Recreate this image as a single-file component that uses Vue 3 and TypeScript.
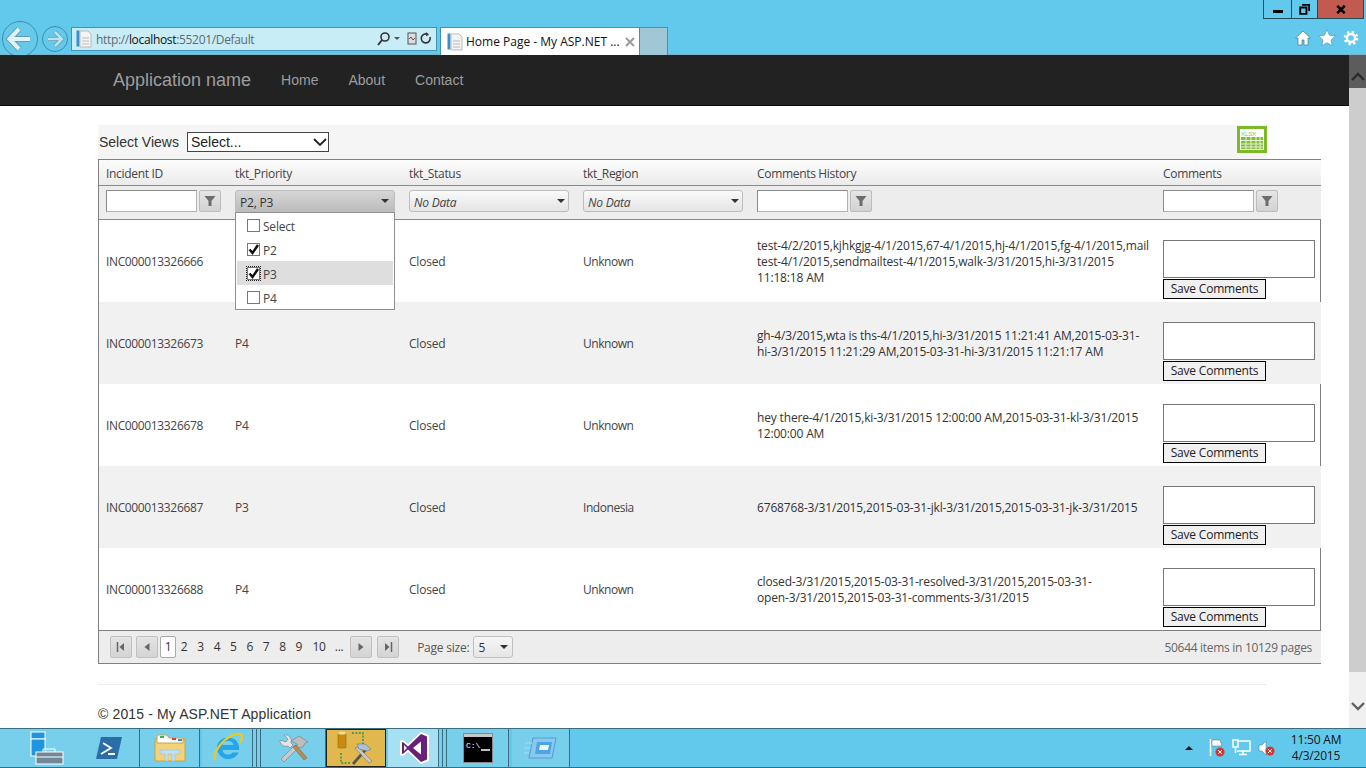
<template>
  <div class="screen">
    <header class="browser">
      <div class="win-row">
        <div class="win-btns">
          <button class="wb wb-min"><span class="min-bar"></span></button>
          <button class="wb wb-max">
            <svg width="11" height="11" viewBox="0 0 14 14"><path d="M4 1h9v8M1.500 4.500h8v8h-8z" fill="none" stroke="#000" stroke-width="2.400"/></svg>
          </button>
          <button class="wb wb-close">
            <svg width="10" height="9" viewBox="0 0 12 10"><path d="M1.500 0.500l9 9M10.500 0.500l-9 9" stroke="#000" stroke-width="3"/></svg>
          </button>
        </div>
      </div>
      <div class="nav-row">
        <svg class="back" width="38" height="38" viewBox="0 0 38 38">
          <circle cx="19" cy="19" r="17.500" fill="#66c9ea" stroke="#3a8fad"/>
          <path d="M18 9l-9.500 10 9.500 10M9 19h20" fill="none" stroke="#5f9db3" stroke-width="6"/>
          <path d="M18 9l-9.500 10 9.500 10M9 19h20" fill="none" stroke="#dff2f9" stroke-width="4"/>
        </svg>
        <svg class="fwd" width="28" height="28" viewBox="0 0 28 28">
          <circle cx="14" cy="14" r="12.500" fill="#66c9ea" stroke="#3a8fad"/>
          <path d="M14 7l7 7-7 7M21 14H7" fill="none" stroke="#5f9db3" stroke-width="4"/>
          <path d="M14 7l7 7-7 7M21 14H7" fill="none" stroke="#b9e4f2" stroke-width="2.500"/>
        </svg>
        <div class="addr">
          <svg class="doc" width="16" height="18" viewBox="0 0 16 18"><rect x="0.500" y="0.500" width="3" height="16" fill="#3a8fd0"/><path d="M4 1h8l3 3v13H4z" fill="#f4f4f4" stroke="#bbb"/><path d="M6 8h7M6 11h7M6 14h7" stroke="#bbb"/></svg>
          <span class="url">http://<b>localhost</b>:55201/Default</span>
          <svg class="addr-ico" width="58" height="16" viewBox="0 0 58 16">
            <circle cx="10" cy="6" r="4" fill="none" stroke="#333" stroke-width="1.600"/>
            <path d="M7 9l-4 5" stroke="#333" stroke-width="2"/>
            <path d="M19 6h6l-3 3z" fill="#555"/>
            <rect x="33" y="2" width="8" height="11" fill="#ddd" stroke="#555"/>
            <path d="M34 8l2-2 2 3 2-2" fill="none" stroke="#555"/>
            <path d="M55 6a4.500 4.500 0 1 1-2-2.500" fill="none" stroke="#333" stroke-width="1.600"/>
            <path d="M51 1l3 3-3 1z" fill="#333"/>
          </svg>
        </div>
        <div class="tab">
          <svg width="16" height="18" viewBox="0 0 16 18"><rect x="0.500" y="0.500" width="3" height="16" fill="#3a8fd0"/><path d="M4 1h8l3 3v13H4z" fill="#f4f4f4" stroke="#bbb"/><path d="M6 8h7M6 11h7M6 14h7" stroke="#bbb"/></svg>
          <span class="tab-title">Home Page - My ASP.NET ...</span>
          <svg width="10" height="10" viewBox="0 0 10 10"><path d="M1 1l8 8M9 1l-8 8" stroke="#9a9a9a" stroke-width="2"/></svg>
        </div>
        <div class="new-tab"></div>
        <div class="tools">
          <svg width="16" height="16" viewBox="0 0 16 16"><path d="M8 1L0.500 8h2.500v7h4v-5h2v5h4V8h2.500z" fill="#fff" stroke="#3b7d95" stroke-width="0.700"/></svg>
          <svg width="18" height="18" viewBox="0 0 18 18"><path d="M9 0.800l2.500 5.400 5.900.7-4.400 4 1.200 5.800L9 13.800l-5.200 2.900L5 10.900.6 6.900l5.900-.7z" fill="#fff" stroke="#3b7d95" stroke-width="0.500"/></svg>
          <svg width="16" height="16" viewBox="0 0 16 16"><circle cx="8" cy="8" r="4" fill="none" stroke="#fff" stroke-width="2.400"/><circle cx="8" cy="8" r="6" fill="none" stroke="#fff" stroke-width="2.600" stroke-dasharray="2.300 2.400"/></svg>
        </div>
      </div>
    </header>

    <div class="viewport">
      <main class="page">
        <nav class="navbar">
          <a class="brand">Application name</a>
          <a v-for="link in navLinks" :key="link" class="nav-link">{{ link }}</a>
        </nav>

        <div class="content">
          <div class="views">
            <span class="views-label">Select Views</span>
            <div class="views-select">
              <span>Select...</span>
              <svg width="14" height="8" viewBox="0 0 14 8"><path d="M1 1l6 6 6-6" fill="none" stroke="#222" stroke-width="1.800"/></svg>
            </div>
            <svg class="xlsx" width="30" height="27" viewBox="0 0 30 27">
              <rect width="30" height="27" fill="#7ab929"/>
              <rect x="3" y="3" width="24" height="21" fill="#fff"/>
              <rect x="4" y="11" width="22" height="12" fill="#83bd3a"/>
              <path d="M4 14.500h22M4 18h22M4 21h22M9 11v12M14 11v12M19 11v12M23 11v12" stroke="#e7f3d5"/>
              <text x="4" y="9.500" class="xlsx-txt">XLSX</text>
            </svg>
          </div>

          <section class="grid">
            <div class="row head">
              <div v-for="c in columns" :key="c" class="cell">{{ c }}</div>
            </div>
            <div class="row filters">
              <div class="cell filter-text">
                <input class="f-input" type="text" />
                <button class="f-btn"><svg width="12" height="12" viewBox="0 0 12 12"><path d="M0.500 1h11L7.500 6v5h-3V6z" fill="#6d6d6d"/></svg></button>
              </div>
              <div class="cell">
                <div class="combo combo-open">
                  <span>P2, P3</span><i class="caret"></i>
                </div>
              </div>
              <div class="cell">
                <div class="combo"><em>No Data</em><i class="caret"></i></div>
              </div>
              <div class="cell">
                <div class="combo"><em>No Data</em><i class="caret"></i></div>
              </div>
              <div class="cell filter-text">
                <input class="f-input" type="text" />
                <button class="f-btn"><svg width="12" height="12" viewBox="0 0 12 12"><path d="M0.500 1h11L7.500 6v5h-3V6z" fill="#6d6d6d"/></svg></button>
              </div>
              <div class="cell filter-text">
                <input class="f-input" type="text" />
                <button class="f-btn"><svg width="12" height="12" viewBox="0 0 12 12"><path d="M0.500 1h11L7.500 6v5h-3V6z" fill="#6d6d6d"/></svg></button>
              </div>
            </div>

            <div v-for="(r, i) in rows" :key="r.id" class="row data" :class="{ alt: i % 2 === 1 }">
              <div class="cell c-id">{{ r.id }}</div>
              <div class="cell">{{ r.priority }}</div>
              <div class="cell">{{ r.status }}</div>
              <div class="cell c-region">{{ r.region }}</div>
              <div class="cell history">
                <div v-for="line in r.history" :key="line">{{ line }}</div>
              </div>
              <div class="cell comment">
                <div class="c-area"></div>
                <button class="c-save">Save Comments</button>
              </div>
            </div>

            <div class="pager">
              <button class="p-btn"><svg width="10" height="10" viewBox="0 0 10 10"><path d="M1.500 0v10" stroke="#666" stroke-width="1.500"/><path d="M8 1v8L3.500 5z" fill="#666"/></svg></button>
              <button class="p-btn"><svg width="10" height="10" viewBox="0 0 10 10"><path d="M7.500 1v8L2.500 5z" fill="#666"/></svg></button>
              <div class="pages">
                <span v-for="p in pages" :key="p" class="pg" :class="{ cur: p === '1', wide: p.length > 1 }">{{ p }}</span>
              </div>
              <button class="p-btn p-next"><svg width="10" height="10" viewBox="0 0 10 10"><path d="M2.500 1v8L7.500 5z" fill="#666"/></svg></button>
              <button class="p-btn"><svg width="10" height="10" viewBox="0 0 10 10"><path d="M8.500 0v10" stroke="#666" stroke-width="1.500"/><path d="M2 1v8L6.500 5z" fill="#666"/></svg></button>
              <span class="size-label">Page size:</span>
              <div class="size-sel"><span>5</span><i class="caret"></i></div>
              <span class="p-info">50644 items in 10129 pages</span>
            </div>

            <div class="popup">
              <div v-for="o in options" :key="o.label" class="opt" :class="{ hl: o.focus }">
                <span class="box" :class="{ focus: o.focus }">
                  <svg v-if="o.on" width="13" height="13" viewBox="0 0 13 13"><path d="M2.500 6.500l3 3.500 5.500-8" fill="none" stroke="#111" stroke-width="2.500"/></svg>
                </span>
                <span class="opt-label">{{ o.label }}</span>
              </div>
            </div>
          </section>

          <div class="rule"></div>
          <footer class="foot">© 2015 - My ASP.NET Application</footer>
        </div>
      </main>

      <aside class="scroll">
        <div class="s-up">
          <svg width="14" height="9" viewBox="0 0 14 9"><path d="M1 8l6-6 6 6" fill="none" stroke="#2b2b2b" stroke-width="2.400"/></svg>
        </div>
        <div class="s-thumb"></div>
        <div class="s-track"></div>
        <div class="s-down">
          <svg width="14" height="9" viewBox="0 0 14 9"><path d="M1 1l6 6 6-6" fill="none" stroke="#606060" stroke-width="2.400"/></svg>
        </div>
      </aside>
    </div>

    <footer class="taskbar">
      <div class="tb tb-server">
        <svg width="34" height="34" viewBox="0 0 34 34">
          <rect x="1" y="1" width="14" height="7" fill="#1f95e0" stroke="#fff"/>
          <rect x="1" y="8" width="14" height="17" fill="#1f95e0" stroke="#fff"/>
          <rect x="6" y="21" width="27" height="12" fill="#6f8796" stroke="#fff"/>
          <path d="M13 21v-3h12v3M6 26h27" fill="none" stroke="#fff"/>
        </svg>
        <svg class="ps" width="28" height="26" viewBox="0 0 28 26">
          <path d="M6 2h21l-5 22H1z" fill="#2a6ea8"/>
          <path d="M8 8l8 5-10 6M13 19h7" fill="none" stroke="#fff" stroke-width="1.800"/>
        </svg>
      </div>
      <div class="tb tb-folder">
        <svg width="32" height="30" viewBox="0 0 32 30">
          <path d="M1 6h30v22H1z" fill="#f2d37b" stroke="#c8a24c"/>
          <path d="M3 2h10l2 3h14v5H3z" fill="#fff" stroke="#c8a24c"/>
          <rect x="6" y="3" width="4" height="2" fill="#3bb54a"/><rect x="18" y="5" width="4" height="2" fill="#d9432f"/><rect x="24" y="6" width="4" height="2" fill="#2a8fd8"/>
          <path d="M6 17h20v4H21v7h-3v-7h-4v7h-3v-7H6z" fill="#bfe0f2" stroke="#8fb8d0" stroke-width="0.500"/>
        </svg>
      </div>
      <div class="tb tb-ie">
        <svg width="32" height="32" viewBox="0 0 32 32">
          <path d="M27 15.500c0-6-5-10-11-10S5 10 5 16s5 11 11 11c5 0 9-2.500 10.500-6.500h-6c-1 1.500-2.500 2-4.500 2-3 0-5-1.500-5.500-4.500H27zM10.500 13c.5-2.500 2.500-4 5.500-4s5 1.500 5.500 4z" fill="#25a6e6"/>
          <path d="M3 28C0 22 10 8 20 3.500 25 1 30 1 30 5c0 2-1 4.500-2 6" fill="none" stroke="#f2c81e" stroke-width="2.200"/>
        </svg>
      </div>
      <div class="tb-stack"></div>
      <div class="tb-stack"></div>
      <div class="tb tb-tools">
        <svg width="32" height="32" viewBox="0 0 32 32">
          <path d="M3 27l3 3 14-14-3-3z" fill="#c9c9c9" stroke="#7a7a7a" stroke-width="0.600"/>
          <path d="M2 8a6 6 0 0 0 8 6l2 2 3-3-2-2a6 6 0 0 0-7-8l4 4-2 3-3-1z" fill="#e4e4e4" stroke="#7a7a7a" stroke-width="0.600"/>
          <path d="M26 28l3-2-11-13-3 2z" fill="#b98b4e" stroke="#7a5c30" stroke-width="0.500"/>
          <path d="M13 9l8-5 9 6-3 1-2 4-5 1-1-4z" fill="#bdbdbd" stroke="#777" stroke-width="0.600"/>
        </svg>
      </div>
      <div class="tb tb-active">
        <svg width="38" height="36" viewBox="0 0 38 36">
          <rect x="1" y="3" width="8" height="15" rx="1" fill="#c98a10" stroke="#8a6008" stroke-width="0.500"/>
          <ellipse cx="5" cy="3" rx="4" ry="1.600" fill="#f4dc92"/>
          <path d="M15 3h11v12M4 23v10h10" fill="none" stroke="#2f8f4a" stroke-width="1.400" stroke-dasharray="2 1.400"/>
          <path d="M15 33l14-16 2 2-14 16z" fill="#555"/>
          <path d="M18 18l14 15 3-2-14-14z" fill="#c9c9c9" stroke="#666" stroke-width="0.500"/>
          <path d="M20 14h8l6 5-4 2-8-2z" fill="#a8c2de" stroke="#666" stroke-width="0.500"/>
        </svg>
      </div>
      <div class="tb tb-light tb-vs">
        <svg width="30" height="34" viewBox="0 0 30 34">
          <path d="M21 1l8 3v26l-8 3L8 21l-5 4-3-1V10l3-1 5 4z" fill="#fff"/>
          <path d="M21 3l6 2.500v23L21 31 8 18.500 3 23l-1-.5v-11l1-.5 5 4.500zM21 10.500L13 17l8 6.500zM4 14v6l3-3z" fill="#68217a" fill-rule="evenodd"/>
        </svg>
      </div>
      <div class="tb-stack"></div>
      <div class="tb-stack"></div>
      <div class="tb tb-cmd">
        <svg width="30" height="30" viewBox="0 0 30 30">
          <rect x="0.500" y="0.500" width="29" height="29" fill="#000" stroke="#8a8a8a"/>
          <rect x="1" y="1" width="28" height="3" fill="#c8c8c8"/>
          <text x="3" y="15" class="cmd-txt">C:\</text>
          <path d="M18 17h9" stroke="#fff" stroke-width="1.500"/>
        </svg>
      </div>
      <div class="tb tb-last">
        <svg width="34" height="26" viewBox="0 0 34 26">
          <path d="M9 3h23l-4 20H5z" fill="#8cc8ee" stroke="#4a9fd8"/>
          <path d="M13 7h15l-2 12H11z" fill="#4aa5e4"/>
          <path d="M16 10h9l-1 5h-9z" fill="#eaf6fd"/>
          <path d="M1 8h7M0 13h6M0 18h5" stroke="#9ed3f2" stroke-width="1.500"/>
        </svg>
      </div>
      <div class="tray">
        <i class="tray-up"></i>
        <svg width="16" height="20" viewBox="0 0 16 20"><path d="M1.500 1v17" stroke="#fff" stroke-width="1.500"/><path d="M3 2h8l2 6H3z" fill="#fff" stroke="#4a6b78" stroke-width="0.500"/><circle cx="11" cy="14" r="4.500" fill="#d9332c"/><path d="M9 12l4 4M13 12l-4 4" stroke="#fff"/></svg>
        <svg width="19" height="18" viewBox="0 0 19 18"><path d="M5 2h13v10H5M11 12v3M7 15.500h8" fill="none" stroke="#fff" stroke-width="1.500"/><rect x="1" y="1" width="5" height="7" fill="none" stroke="#fff" stroke-width="1.500"/><path d="M3.500 8v6" stroke="#fff" stroke-width="1.500"/></svg>
        <svg width="18" height="18" viewBox="0 0 18 18"><path d="M1 6h3l4-4v14l-4-4H1z" fill="#fff" stroke="#4a6b78" stroke-width="0.500"/><circle cx="12" cy="12" r="4.500" fill="#d9332c"/><path d="M10 10l4 4M14 10l-4 4" stroke="#fff"/></svg>
        <div class="clock"><div>11:50 AM</div><div>4/3/2015</div></div>
      </div>
    </footer>
  </div>
</template>

<script setup lang="ts">
interface Incident {
  id: string;
  priority: string;
  status: string;
  region: string;
  history: string[];
}

const navLinks = ['Home', 'About', 'Contact'];
const columns = ['Incident ID', 'tkt_Priority', 'tkt_Status', 'tkt_Region', 'Comments History', 'Comments'];
const pages = ['1', '2', '3', '4', '5', '6', '7', '8', '9', '10', '...'];

const options = [
  { label: 'Select', on: false, focus: false },
  { label: 'P2', on: true, focus: false },
  { label: 'P3', on: true, focus: true },
  { label: 'P4', on: false, focus: false },
];

const rows: Incident[] = [
  {
    id: 'INC000013326666',
    priority: '',
    status: 'Closed',
    region: 'Unknown',
    history: [
      'test-4/2/2015,kjhkgjg-4/1/2015,67-4/1/2015,hj-4/1/2015,fg-4/1/2015,mail',
      'test-4/1/2015,sendmailtest-4/1/2015,walk-3/31/2015,hi-3/31/2015',
      '11:18:18 AM',
    ],
  },
  {
    id: 'INC000013326673',
    priority: 'P4',
    status: 'Closed',
    region: 'Unknown',
    history: [
      'gh-4/3/2015,wta is ths-4/1/2015,hi-3/31/2015 11:21:41 AM,2015-03-31-',
      'hi-3/31/2015 11:21:29 AM,2015-03-31-hi-3/31/2015 11:21:17 AM',
    ],
  },
  {
    id: 'INC000013326678',
    priority: 'P4',
    status: 'Closed',
    region: 'Unknown',
    history: ['hey there-4/1/2015,ki-3/31/2015 12:00:00 AM,2015-03-31-kl-3/31/2015', '12:00:00 AM'],
  },
  {
    id: 'INC000013326687',
    priority: 'P3',
    status: 'Closed',
    region: 'Indonesia',
    history: ['6768768-3/31/2015,2015-03-31-jkl-3/31/2015,2015-03-31-jk-3/31/2015'],
  },
  {
    id: 'INC000013326688',
    priority: 'P4',
    status: 'Closed',
    region: 'Unknown',
    history: ['closed-3/31/2015,2015-03-31-resolved-3/31/2015,2015-03-31-', 'open-3/31/2015,2015-03-31-comments-3/31/2015'],
  },
];
</script>

<style>
html, body {
  margin: 0;
  overflow: hidden;
}
</style>

<style scoped>
.screen {
  width: 1366px;
  height: 768px;
  display: flex;
  flex-direction: column;
  overflow: hidden;
  font-family: "Open Sans", "Noto Sans", sans-serif;
  background: #fff;
}

/* browser frame */
.browser {
  height: 55px;
  flex: none;
  overflow: hidden;
  background: #63c9ec;
  box-shadow: inset 0 -1px 0 #7db4c8;
}
.win-row {
  height: 19px;
  display: flex;
  justify-content: flex-end;
  padding-right: 2px;
}
.win-btns {
  display: flex;
  border: 1px solid #1d4d5f;
  border-top: 0;
  height: 19px;
  box-sizing: border-box;
}
.wb {
  padding: 0;
  border: 0;
  background: transparent;
  display: flex;
  align-items: center;
  justify-content: center;
}
.wb-min { width: 28px; border-right: 1px solid #1d4d5f; }
.wb-max { width: 26px; border-right: 1px solid #1d4d5f; }
.wb-close { width: 45px; background: #c25a50; }
.min-bar { width: 10px; height: 3px; background: #000; margin-top: 4px; }

.nav-row {
  height: 36px;
  display: flex;
  align-items: flex-start;
}
.back { margin: 1px 0 0 1px; flex: none; }
.fwd { margin: 6px 0 0 2px; flex: none; }
.addr {
  width: 366px;
  height: 24px;
  margin: 8px 0 0 2px;
  box-sizing: border-box;
  border: 1px solid #3f94b0;
  background: #c9edf7;
  display: flex;
  align-items: center;
  padding: 0 3px 0 4px;
}
.url {
  margin-left: 4px;
  font-size: 12px;
  letter-spacing: -0.33px;
  color: #5d6a70;
}
.url b { font-weight: 400; color: #111; }
.addr-ico { margin-left: auto; flex: none; }
.tab {
  width: 200px;
  height: 28px;
  margin: 8px 0 0 3px;
  box-sizing: border-box;
  background: #fff;
  border: 1px solid #3f94b0;
  border-bottom: 0;
  display: flex;
  align-items: center;
  gap: 3px;
  padding: 0 4px 0 6px;
}
.tab-title {
  font-size: 12px;
  color: #111;
  flex: 1;
  white-space: nowrap;
}
.new-tab {
  width: 28px;
  height: 28px;
  margin-top: 8px;
  box-sizing: border-box;
  background: #9fc7d6;
  border: 1px solid #3f94b0;
  border-left: 0;
  border-bottom: 0;
}
.tools {
  margin-left: auto;
  padding: 10px 7px 0 0;
  display: flex;
  align-items: center;
  gap: 7px;
}

/* page */
.viewport {
  flex: 1;
  min-height: 0;
  display: flex;
}
.page {
  flex: 1;
  min-width: 0;
  overflow: hidden;
}
.navbar {
  height: 51px;
  box-sizing: border-box;
  background: #222;
  border-bottom: 1px solid #080808;
  display: flex;
  align-items: center;
  padding: 0 0 1px 113px;
  font-family: "Liberation Sans", Arial, sans-serif;
  color: #9d9d9d;
}
.brand { font-size: 18px; margin: 2px 30px 0 0; }
.nav-link { font-size: 14px; margin-right: 30px; }

.content {
  padding: 19px 0 0 98px;
  font-family: "Liberation Sans", Arial, sans-serif;
  color: #333;
}
.views {
  width: 1169px;
  height: 34px;
  box-sizing: border-box;
  background: #f5f5f5;
  display: flex;
  align-items: flex-start;
  padding: 7px 0 0 1px;
  position: relative;
}
.views-label { font-size: 14px; line-height: 20px; margin-right: 8px; }
.views-select {
  width: 142px;
  height: 20px;
  box-sizing: border-box;
  border: 1px solid #444;
  background: #fff;
  display: flex;
  align-items: center;
  justify-content: space-between;
  padding: 0 1px 0 3px;
  font-size: 14px;
  color: #222;
}
.xlsx {
  position: absolute;
  right: 0;
  top: 1px;
}
.xlsx-txt {
  font-size: 6px;
  fill: #8abf45;
}

.grid {
  width: 1223px;
  position: relative;
  font-family: "Open Sans", "Noto Sans", sans-serif;
  font-size: 12px;
  letter-spacing: -0.22px;
  color: #444;
  box-sizing: border-box;
  border-top: 1px solid #808080;
  border-left: 1px solid #808080;
}
.row {
  display: grid;
  grid-template-columns: 129px 174px 174px 174px 406px 165px;
}
.cell {
  padding: 0 7px;
  min-width: 0;
}
.head {
  height: 26px;
  box-sizing: border-box;
  align-items: center;
  padding-top: 2px;
  letter-spacing: -0.32px;
  background: linear-gradient(#fcfcfc, #ebebeb);
  border-bottom: 1px solid #8a8a8a;
}
.filters {
  height: 34px;
  box-sizing: border-box;
  background: #ededed;
  border-bottom: 1px solid #8a8a8a;
  padding-top: 4px;
}
.filter-text {
  display: flex;
  gap: 2px;
  align-items: flex-start;
}
.f-input {
  width: 91px;
  height: 22px;
  box-sizing: border-box;
  padding: 0;
  border: 1px solid #b4b4b4;
  border-top-color: #8a8a8a;
  border-left-color: #8a8a8a;
  background: #fff;
}
.f-btn {
  width: 22px;
  height: 22px;
  padding: 0;
  border: 1px solid #bdbdbd;
  border-radius: 2px;
  background: linear-gradient(#e6e6e6, #d2d2d2);
  display: flex;
  align-items: center;
  justify-content: center;
}
.combo {
  width: 160px;
  height: 22px;
  box-sizing: border-box;
  border: 1px solid #bdbdbd;
  border-radius: 3px;
  background: linear-gradient(#fafafa, #e4e4e4);
  display: flex;
  align-items: center;
  justify-content: space-between;
  padding: 3px 3px 0 4px;
  color: #444;
}
.combo .caret { margin-top: -3px; }
.combo-open {
  background: linear-gradient(#d6d6d6, #bcbcbc);
  border-bottom-left-radius: 0;
  border-bottom-right-radius: 0;
  color: #333;
  padding-right: 5px;
}
.caret {
  width: 0;
  height: 0;
  border-left: 4px solid transparent;
  border-right: 4px solid transparent;
  border-top: 4px solid #333;
}

.data {
  height: 82px;
  align-items: center;
  background: #fff;
  box-shadow: inset -1px 0 0 #808080;
}
.data.alt {
  background: #f1f1f1;
  box-shadow: none;
}
.c-id { letter-spacing: -0.36px; }
.c-region { letter-spacing: -0.45px; }
.history {
  padding-top: 2px;
  line-height: 16px;
  letter-spacing: -0.16px;
  color: #333;
  white-space: nowrap;
}
.comment {
  padding-top: 16px;
}
.c-area {
  width: 152px;
  height: 38px;
  box-sizing: border-box;
  border: 1px solid #767676;
  background: #fff;
}
.c-save {
  display: block;
  width: 103px;
  height: 20px;
  margin-top: 1px;
  padding: 0;
  box-sizing: border-box;
  border: 1px solid #000;
  background: #f0f0f0;
  font: inherit;
  letter-spacing: -0.2px;
  color: #222;
}

.pager {
  height: 34px;
  box-sizing: border-box;
  background: #ededed;
  border-top: 1px solid #808080;
  border-bottom: 1px solid #808080;
  display: flex;
  align-items: center;
  padding-left: 11px;
  color: #555;
}
.p-btn {
  width: 22px;
  height: 22px;
  padding: 0;
  margin-right: 4px;
  border: 1px solid #c0c0c0;
  border-radius: 2px;
  background: linear-gradient(#e4e4e4, #d4d4d4);
  display: flex;
  align-items: center;
  justify-content: center;
}
.p-next { margin-right: 5px; }
.pages {
  display: flex;
  align-items: center;
  margin: 0 1px 0 -2px;
}
.pg {
  min-width: 16.400px;
  height: 22px;
  line-height: 22px;
  text-align: center;
  box-sizing: border-box;
  color: #333;
}
.pg.wide { width: 20px; }
.pg.wide:nth-last-child(2) { margin-left: 2px; }
.pg.cur {
  width: 16px;
  min-width: 16px;
  line-height: 20px;
  background: #fff;
  border: 1px solid #aaa;
  border-radius: 2px;
}
.size-label { margin-left: 14px; }
.size-sel {
  width: 40px;
  height: 22px;
  box-sizing: border-box;
  margin-left: 4px;
  border: 1px solid #c0c0c0;
  border-radius: 3px;
  background: linear-gradient(#f6f6f6, #e6e6e6);
  display: flex;
  align-items: center;
  justify-content: space-between;
  padding: 0 4px 0 4px;
  color: #333;
}
.p-info {
  margin-left: auto;
  padding-right: 9px;
  letter-spacing: -0.3px;
  color: #666;
}

.popup {
  position: absolute;
  left: 136px;
  top: 52px;
  width: 160px;
  height: 98px;
  box-sizing: border-box;
  background: #fff;
  border: 1px solid #8f8f8f;
  padding: 0 1px;
}
.opt {
  height: 24px;
  display: flex;
  align-items: center;
  padding-left: 10px;
  gap: 3px;
  color: #444;
}
.opt-label { margin-top: 2px; }
.opt.hl { background: #dedede; }
.box {
  width: 13px;
  height: 13px;
  box-sizing: border-box;
  border: 1px solid #777;
  background: #fff;
  display: flex;
}
.box svg { margin: -1px; flex: none; }
.box.focus { outline: 1px dotted #222; }

.rule {
  width: 1169px;
  height: 1px;
  margin-top: 20px;
  background: #eee;
}
.foot {
  margin-top: 21px;
  font-size: 14px;
  line-height: 16px;
  letter-spacing: 0.13px;
}

/* scrollbar */
.scroll {
  width: 17px;
  flex: none;
  background: #f0f0f0;
  display: flex;
  flex-direction: column;
}
.s-up {
  height: 33px;
  background: #5c5c5c;
  display: flex;
  align-items: center;
  justify-content: center;
  padding-top: 10px;
  box-sizing: border-box;
}
.s-thumb {
  height: 584px;
  background: #cdcdcd;
}
.s-track { flex: 1; }
.s-down {
  height: 33px;
  box-sizing: border-box;
  padding-bottom: 10px;
  display: flex;
  align-items: center;
  justify-content: center;
}

/* task bar */
.taskbar {
  height: 40px;
  flex: none;
  box-sizing: border-box;
  background: #63c9ec;
  border-top: 1px solid #3c6d7f;
  border-bottom: 1px solid #3c6d7f;
  display: flex;
}
.tb {
  box-sizing: border-box;
  flex: none;
  background: #77cfec;
  border-right: 1px solid #3c6d7f;
  display: flex;
  align-items: center;
  justify-content: center;
}
.tb-stack {
  width: 4px;
  flex: none;
  box-sizing: border-box;
  background: #77cfec;
  border-right: 1px solid #3c6d7f;
}
.tb-light { background: #a6e0f2; }
.tb-server { width: 140px; padding: 0 16px 0 30px; justify-content: space-between; }
.tb-folder { width: 60px; margin-right: 2px; }
.tb-ie { width: 51px; padding-left: 2px; }
.tb-tools { width: 65px; padding-left: 2px; }
.tb-active { width: 60px; background: #e0b84d; border: 1px solid #222; margin-right: 2px; }
.tb-vs { width: 51px; padding-left: 4px; }
.tb-cmd { width: 62px; margin-right: 3px; }
.tb-last { width: 58px; }
.cmd-txt {
  font-family: "Liberation Mono", monospace;
  font-size: 8px;
  fill: #fff;
}
.tray {
  margin-left: auto;
  display: flex;
  align-items: center;
  gap: 7px;
  padding-right: 22px;
}
.tray-up {
  width: 0;
  height: 0;
  margin-right: 9px;
  border-left: 4px solid transparent;
  border-right: 4px solid transparent;
  border-bottom: 4px solid #111;
}
.clock {
  width: 56px;
  margin-left: 5px;
  text-align: center;
  font-size: 12px;
  line-height: 16px;
  letter-spacing: -0.2px;
  color: #111;
}
</style>
